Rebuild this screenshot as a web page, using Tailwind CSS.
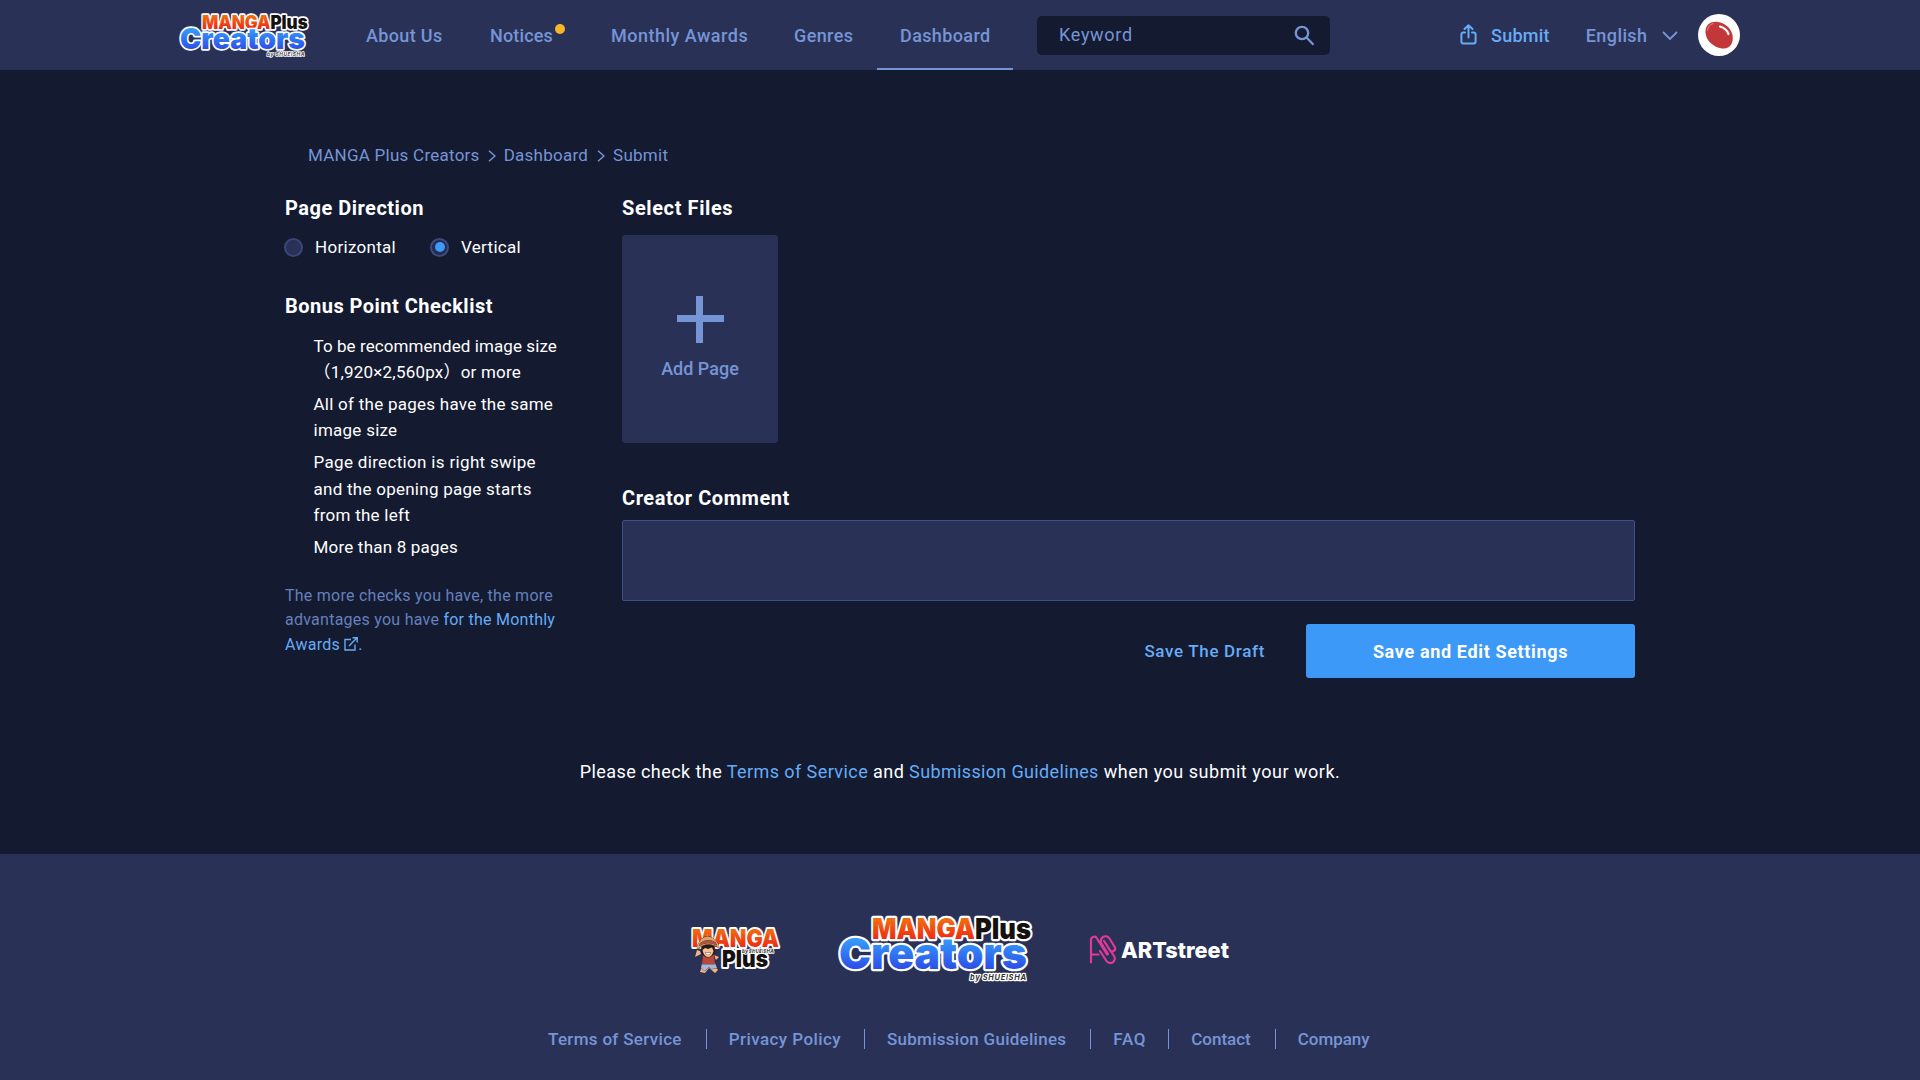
<!DOCTYPE html>
<html lang="en">
<head>
<meta charset="utf-8">
<title>Submit | MANGA Plus Creators</title>
<script src="https://cdn.jsdelivr.net/npm/@tailwindcss/browser@4"></script>
</head>
<body class="flex h-[1080px] w-[1920px] flex-col overflow-hidden bg-[#141a30] font-['Roboto','Noto_Sans_CJK_JP',sans-serif] text-white">

<svg class="absolute size-0">
  <defs>
    <linearGradient id="red" x1="0" y1="0.25" x2="0" y2="0.85"><stop offset="0" stop-color="#ef6a10"/><stop offset="1" stop-color="#ee2414"/></linearGradient>
    <linearGradient id="blue" x1="0" y1="0.2" x2="0" y2="0.85"><stop offset="0" stop-color="#37a0fb"/><stop offset="1" stop-color="#2b48e6"/></linearGradient>
  </defs>
</svg>

<header class="flex h-[70px] shrink-0 items-center bg-[#2a3156] pl-[178px] text-[18px] font-medium text-[#7695d6]">
  <svg class="mt-[-1px] h-[48px] w-[133px] overflow-visible" viewBox="0 0 200 72" font-family="Inter, sans-serif" font-weight="900" stroke="#fff" stroke-width="5" stroke-linejoin="round" paint-order="stroke">
    <text x="36" y="27" font-size="28" textLength="103" lengthAdjust="spacingAndGlyphs" fill="url(#red)">MANGA</text>
    <text x="139" y="27" font-size="28" textLength="56" lengthAdjust="spacingAndGlyphs" fill="#15110f">Plus</text>
    <text x="3" y="57" font-size="43" textLength="188" lengthAdjust="spacingAndGlyphs" fill="url(#blue)">Creators</text>
    <text x="134" y="68" font-size="7.5" font-weight="700" font-style="italic" textLength="56" stroke-width="2.5" fill="#444">by SHUEISHA</text>
  </svg>
  <nav class="ml-[32px] flex h-full leading-[71px]">
    <a class="w-[124px] pl-[23px] tracking-[0.35px]">About Us</a>
    <a class="relative w-[121px] pl-[23px] tracking-[0.15px]">Notices<span class="absolute top-[24px] left-[88px] size-[10px] rounded-full bg-[#f8b62b]"></span></a>
    <a class="w-[183px] pl-[23px] tracking-[0.5px]">Monthly Awards</a>
    <a class="w-[106px] pl-[23px] tracking-[0.38px]">Genres</a>
    <a class="w-[136px] border-b-2 border-[#7695d6] pl-[23px] tracking-[0.38px]">Dashboard</a>
  </nav>
  <div class="ml-[24px] flex h-[39px] w-[293px] items-center justify-between rounded-[5px] bg-[#141a30] pr-[15px] pl-[22px]">
    <span class="-mt-0.5 font-normal tracking-[0.7px]">Keyword</span>
    <svg class="size-[21px]" viewBox="0 0 21 21" fill="none" stroke="#7695d6" stroke-width="2.3"><circle cx="8" cy="8" r="6.2"/><path d="M12.5 12.5 19.5 19.8"/></svg>
  </div>
  <a class="ml-[130px] flex items-center text-[#66acf6]">
    <svg class="-mt-0.5 h-[21px] w-[17px]" viewBox="0 0 17 21" fill="none" stroke="currentColor" stroke-width="2" stroke-linecap="round" stroke-linejoin="round"><path d="M5 8.5H3.2A1.8 1.8 0 0 0 1.4 10.3V17.5A2 2 0 0 0 3.4 19.5H13.6A2 2 0 0 0 15.6 17.5V10.3A1.8 1.8 0 0 0 13.8 8.5H12M8.5 13.5V1.5M4.5 5 8.5 1.2 12.5 5"/></svg>
    <span class="ml-[14px] tracking-[0.25px]">Submit</span>
  </a>
  <div class="ml-[36px] flex items-center tracking-[0.4px]">English
    <svg class="ml-[15px] h-[9px] w-[16px]" viewBox="0 0 16 9" fill="none" stroke="currentColor" stroke-width="1.8"><path d="M1 1 8 8 15 1"/></svg>
  </div>
  <svg class="ml-[20px] size-[42px]" viewBox="0 0 42 42"><circle cx="21" cy="21" r="21" fill="#fff"/><path d="M7.5 17C8 10 13.5 7 20 8C27 9 33 14 34.5 21C36 29 32 34.5 26 34.5C17 34.5 7 27 7.5 17Z" fill="#c2383a"/><path d="M9.5 16.5C10 12.5 12.5 10 15.5 9.6" fill="none" stroke="#e98a86" stroke-width="1"/><path d="M22 12.5C26 13.5 29 16 30.5 20" fill="none" stroke="#fff" stroke-width="2.2" stroke-linecap="round"/></svg>
</header>

<main class="flex h-[784px] shrink-0 flex-col pt-[73px] pl-[285px]">
  <div class="flex h-6 items-center pt-px pl-[23px] text-[17px] tracking-[0.25px] text-[#7695d6]">
    <span>MANGA Plus Creators</span>
    <svg class="mr-[8px] ml-[8px] h-[12px] w-[8px]" viewBox="0 0 8 12" fill="none" stroke="currentColor" stroke-width="1.5"><path d="M1 .7 7 6 1 11.3"/></svg>
    <span>Dashboard</span>
    <svg class="mr-[8px] ml-[9px] h-[12px] w-[8px]" viewBox="0 0 8 12" fill="none" stroke="currentColor" stroke-width="1.5"><path d="M1 .7 7 6 1 11.3"/></svg>
    <span>Submit</span>
  </div>

  <div class="mt-[26px] flex">
    <aside class="w-[337px]">
      <h2 class="text-[20px] leading-[30px] font-bold tracking-[0.5px]">Page Direction</h2>
      <div class="mt-[12px] flex h-6 items-center text-[17px] tracking-[0.3px]">
        <span class="-ml-px size-[19px] rounded-full border-2 border-[#3a4678] bg-[#2a3156]"></span>
        <span class="ml-[12px] w-[116px] pt-px">Horizontal</span>
        <span class="-ml-px flex size-[19px] items-center justify-center rounded-full border-2 border-[#3f4a7c] bg-[#232b50]"><span class="size-[10px] rounded-full bg-[#3d9af8]"></span></span>
        <span class="ml-[12px] pt-px">Vertical</span>
      </div>
      <h2 class="mt-[32px] text-[20px] leading-[30px] font-bold tracking-[0.48px]">Bonus Point Checklist</h2>
      <ul class="mt-[11.5px] flex flex-col gap-1.5 pl-[28.5px] text-[17px] leading-[26.2px] tracking-[0.26px] whitespace-nowrap">
        <li><span class="tracking-[0.08px]">To be recommended image size</span><br><span class="tracking-[0.21px]">（1,920×2,560px）or more</span></li>
        <li>All of the pages have the same<br>image size</li>
        <li><span class="tracking-[0.33px]">Page direction is right swipe</span><br>and the opening page starts<br>from the left</li>
        <li class="tracking-[0.2px]">More than 8 pages</li>
      </ul>
      <p class="mt-[23.5px] text-[16px] leading-[24.5px] tracking-[0.25px] text-[#6580bd]">The more checks you have, the more<br>advantages you have <a class="text-[#66acf6]">for the Monthly<br>Awards <svg class="mb-[3px] inline-block size-[14px]" viewBox="0 0 14 14" fill="none" stroke="currentColor" stroke-width="1.4"><path d="M7 2.5H1V13H11V7.5M5 9 12.5 1.3M8.5 .8H13.2V5.5"/></svg>.</a></p>
    </aside>

    <section class="w-[1013px]">
      <h2 class="text-[20px] leading-[30px] font-bold tracking-[0.6px]">Select Files</h2>
      <button class="mt-[12px] flex h-[208px] w-[156px] flex-col items-center rounded-[3px] bg-[#2a3156] pt-[61px] text-[#7695d6]">
        <svg class="size-[47px]" viewBox="0 0 47 47" fill="currentColor"><path d="M19 0h7v19h21v7H26v21h-7V26H0v-7h19z"/></svg>
        <span class="mt-[14px] text-[18px] leading-[24px] font-medium">Add Page</span>
      </button>
      <h2 class="mt-[40px] text-[20px] leading-[30px] font-bold tracking-[0.55px]">Creator Comment</h2>
      <div class="mt-[7px] h-[81px] rounded-[2px] border border-[#3f5089] bg-[#2a3156]"></div>
      <div class="mt-[23px] flex h-[54px] items-center justify-end">
        <a class="mr-[41px] pt-0.5 text-[17px] font-medium tracking-[0.66px] text-[#66acf6]">Save The Draft</a>
        <button class="h-full w-[329px] rounded-[3px] bg-[#3d99f8] text-[18px] font-bold tracking-[0.65px]">Save and Edit Settings</button>
      </div>
    </section>
  </div>

  <p class="mt-[80px] ml-[-285px] text-center text-[18px] leading-[28px] tracking-[0.43px]">Please check the <a class="text-[#66acf6]">Terms of Service</a> and <a class="tracking-[0.35px] text-[#66acf6]">Submission Guidelines</a> <span class="tracking-[0.52px]">when you submit your work.</span></p>
</main>

<footer class="flex grow flex-col bg-[#2a3156]">
  <div class="mt-[58px] flex h-[72px] items-center pl-[688px]">
    <svg class="h-[52px] w-[96px] overflow-visible" viewBox="0 0 96 52" font-family="Inter, sans-serif" font-weight="900" stroke-linejoin="round" paint-order="stroke">
      <text x="34" y="45" font-size="23" textLength="46" lengthAdjust="spacingAndGlyphs" fill="#15110f" stroke="#fff" stroke-width="4">Plus</text>
      <text x="4" y="25" font-size="25" textLength="87" lengthAdjust="spacingAndGlyphs" fill="url(#red)" stroke="#fff" stroke-width="4">MANGA</text>
      <text x="54" y="30.5" font-size="5" font-style="italic" textLength="32" fill="#555" stroke="#fff" stroke-width="1.5">by SHUEISHA</text>
      <g stroke="#3a2723" stroke-width=".7">
        <path d="M13 32 7 35 9 28 12 29M26 33 31 35 28 38" fill="#efb487"/>
        <path d="M14 44 12 50 17 51 21 46 27 51 30 48 26 42Z" fill="#efb487"/>
        <path d="M14 41H27L29 46 23 47 21 45 17 49 13 46Z" fill="#a9b4d8"/>
        <path d="M15 33H26L27 42H14Z" fill="#b8483c"/>
        <circle cx="20" cy="28" r="7" fill="#2a1a18"/>
        <path d="M14.5 28 17 26 20 27 24 25.5 25.5 29Q24 35 20 35T14.5 28Z" fill="#f5c197"/>
        <path d="M17 31Q20 34.5 23 31Z" fill="#fff"/>
        <path d="M9 27Q9 22 13.5 17Q20 12 26 17Q31 21 31 26Q20 18 9 27Z" fill="#dba46a"/>
        <path d="M12.5 21Q20 16 27.5 20.5L28.5 23Q20 18.5 11.5 23.5Z" fill="#b8503c"/>
      </g>
    </svg>
    <svg class="ml-[52px] h-[72px] w-[200px] overflow-visible" viewBox="0 0 200 72" font-family="Inter, sans-serif" font-weight="900" stroke="#fff" stroke-width="4.5" stroke-linejoin="round" paint-order="stroke">
      <text x="36" y="27" font-size="28" textLength="103" lengthAdjust="spacingAndGlyphs" fill="url(#red)">MANGA</text>
      <text x="139" y="27" font-size="28" textLength="56" lengthAdjust="spacingAndGlyphs" fill="#15110f">Plus</text>
      <text x="3" y="57" font-size="43" textLength="188" lengthAdjust="spacingAndGlyphs" fill="url(#blue)">Creators</text>
      <text x="134" y="68" font-size="7.5" font-weight="700" font-style="italic" textLength="56" stroke-width="2.5" fill="#333">by SHUEISHA</text>
    </svg>
    <svg class="mt-[3px] ml-[52px] h-[32px] w-[146px]" viewBox="0 0 146 32">
      <path d="M3 28.5V6.500A3.200 3.200 0 0 1 9 4.500L19 20.500M3 20.500H10.500M12 17 18.500 27A4.500 4.500 0 0 0 26 22L16 7M20 20 13.500 9.500A4.500 4.500 0 0 1 21.500 4.500L27 13.500A3 3 0 0 1 22 16.500L17.500 9" fill="none" stroke="#e0399a" stroke-width="2.200" stroke-linecap="round" stroke-linejoin="round"/>
      <text x="33" y="24" font-family="Inter, sans-serif" font-weight="800" font-size="22" textLength="108" lengthAdjust="spacingAndGlyphs" fill="#fff">ARTstreet</text>
    </svg>
  </div>
  <nav class="mt-[43px] flex h-6 items-center pt-px pl-[548px] text-[17px] font-medium text-[#7695d6]">
    <a class="tracking-[0.32px]">Terms of Service</a><i class="-mt-px mr-[22px] ml-[24px] h-5 w-px bg-[#7695d6]"></i>
    <a class="tracking-[0.42px]">Privacy Policy</a><i class="-mt-px mr-[22px] ml-[23px] h-5 w-px bg-[#7695d6]"></i>
    <a class="tracking-[0.27px]">Submission Guidelines</a><i class="-mt-px mr-[22px] ml-[24px] h-5 w-px bg-[#7695d6]"></i>
    <a class="tracking-[0.7px]">FAQ</a><i class="-mt-px mr-[22px] ml-[22px] h-5 w-px bg-[#7695d6]"></i>
    <a>Contact</a><i class="-mt-px mr-[22px] ml-[24px] h-5 w-px bg-[#7695d6]"></i>
    <a class="tracking-[-0.05px]">Company</a>
  </nav>
</footer>
</body>
</html>
